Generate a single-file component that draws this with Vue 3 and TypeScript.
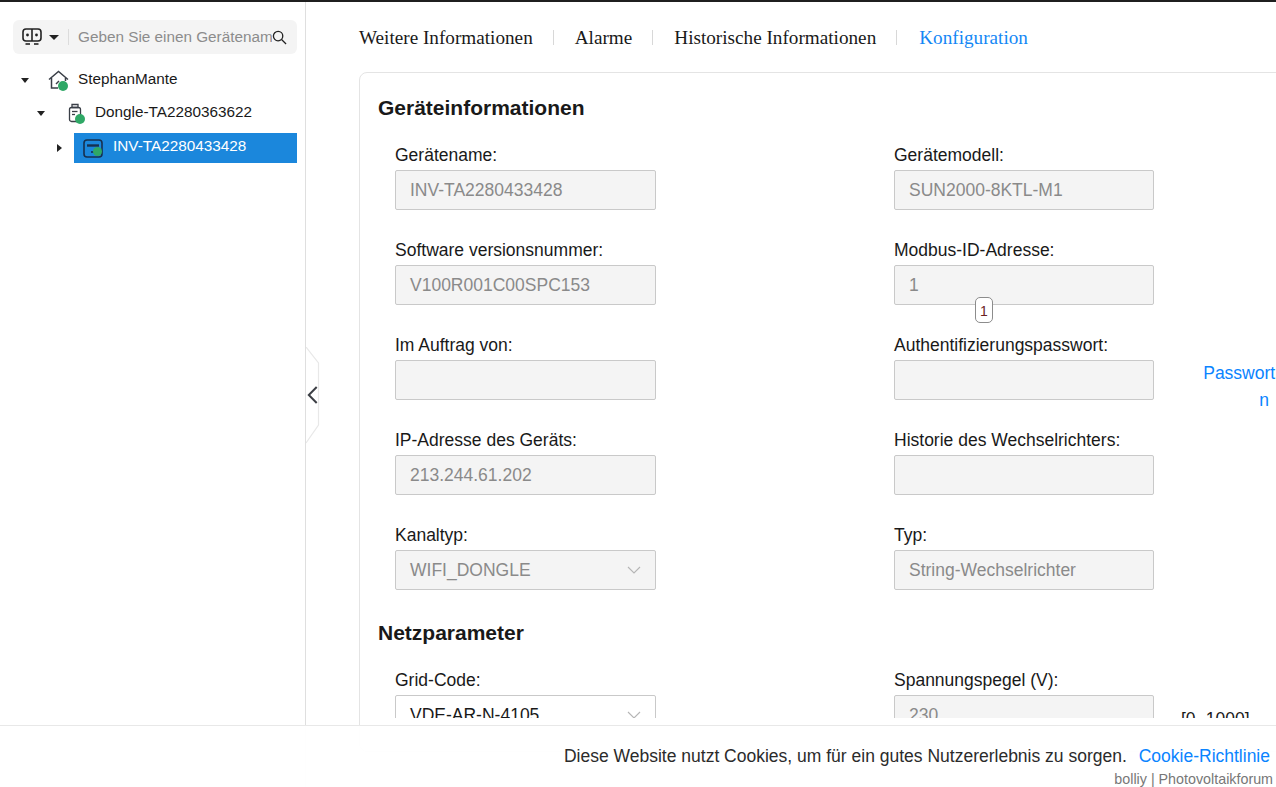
<template>
  <div class="page">
    <div class="layout">
      <aside class="sidebar">
        <div class="search">
          <svg class="device-icon" width="20" height="18" viewBox="0 0 20 18" fill="none" stroke="#222" stroke-width="1.6">
            <rect x="1" y="1" width="18" height="12" rx="3" />
            <line x1="10" y1="1" x2="10" y2="13" />
            <circle cx="5.5" cy="7" r="1.4" fill="#222" stroke="none" />
            <circle cx="14.5" cy="7" r="1.4" fill="#222" stroke="none" />
            <line x1="3.5" y1="16" x2="8" y2="16" />
            <line x1="12" y1="16" x2="16.5" y2="16" />
          </svg>
          <span class="caret down search-caret"></span>
          <span class="search-divider"></span>
          <span class="placeholder">Geben Sie einen Gerätenamen ein</span>
          <svg class="search-icon" width="15" height="15" viewBox="0 0 16 16" fill="none" stroke="#222" stroke-width="1.4">
            <circle cx="6.5" cy="6.5" r="5" />
            <line x1="10.2" y1="10.2" x2="15" y2="15" />
          </svg>
        </div>

        <ul class="tree">
          <li class="node level-0">
            <span class="caret down"></span>
            <span class="node-icon">
              <svg width="21" height="20" viewBox="0 0 21 20" fill="none" stroke="#3a3f47" stroke-width="1.5">
                <path d="M1 9.5 10.5 1.5 20 9.5" />
                <path d="M3.5 8v10h6.5M17.5 8v3" />
                <path d="M8 14l3-3" />
              </svg>
              <i class="dot"></i>
            </span>
            <span class="node-label">StephanMante</span>
          </li>
          <li class="node level-1">
            <span class="caret down"></span>
            <span class="node-icon">
              <svg width="14" height="20" viewBox="0 0 14 20" fill="none" stroke="#3a3f47" stroke-width="1.3">
                <path d="M4 1.5h6v3H4z" />
                <rect x="1.5" y="4.5" width="11" height="14" rx="2" />
                <line x1="4" y1="8.5" x2="9.5" y2="8.5" />
                <line x1="4" y1="11.5" x2="7" y2="11.5" />
              </svg>
              <i class="dot"></i>
            </span>
            <span class="node-label">Dongle-TA2280363622</span>
          </li>
          <li class="node level-2">
            <span class="caret right"></span>
            <div class="node-selected">
              <span class="node-icon">
                <svg width="20" height="19" viewBox="0 0 20 19" fill="none" stroke="#17304f" stroke-width="1.6">
                  <rect x="1" y="1" width="18" height="17" rx="3" />
                  <line x1="4" y1="6.5" x2="16" y2="6.5" stroke-width="2.4" />
                  <line x1="8" y1="13" x2="11" y2="13" />
                </svg>
                <i class="dot"></i>
              </span>
              <span class="node-label">INV-TA2280433428</span>
            </div>
          </li>
        </ul>
      </aside>

      <main class="content">
        <svg class="collapse" width="16" height="100" viewBox="0 0 16 100" fill="#fff" stroke="#e8e8e8" stroke-width="1.2">
          <path d="M0 0 12.5 16V78L0 96" />
          <path d="M10.7 40 2.8 48 10.7 56" fill="none" stroke="#3c3f45" stroke-width="2" />
        </svg>

        <nav class="tabs">
          <a v-for="tab in tabs" :key="tab" class="tab" :class="{ active: tab === 'Konfiguration' }">{{ tab }}</a>
        </nav>

        <section class="card">
          <div class="card-scroll">
            <h2 class="section-title">Geräteinformationen</h2>
            <div class="form-grid">
              <div v-for="field in deviceFields" :key="field.label" class="field">
                <label class="field-label">{{ field.label }}</label>
                <div class="field-row">
                  <div class="input" :class="{ select: field.select }">
                    <span>{{ field.value }}</span>
                    <svg v-if="field.select" class="chevron" width="14" height="8" viewBox="0 0 14 8" fill="none" stroke="#b5b5b5" stroke-width="1.1">
                      <path d="M1 1l6 6 6-6" />
                    </svg>
                  </div>
                  <a v-if="field.link" class="pw-link">{{ field.link }}</a>
                  <span v-if="field.tooltip" class="tooltip">{{ field.tooltip }}</span>
                </div>
              </div>
            </div>

            <h2 class="section-title second">Netzparameter</h2>
            <div class="form-grid">
              <div class="field">
                <label class="field-label">Grid-Code:</label>
                <div class="field-row">
                  <div class="input select editable">
                    <span>VDE-AR-N-4105</span>
                    <svg class="chevron" width="14" height="8" viewBox="0 0 14 8" fill="none" stroke="#b5b5b5" stroke-width="1.1">
                      <path d="M1 1l6 6 6-6" />
                    </svg>
                  </div>
                </div>
              </div>
              <div class="field">
                <label class="field-label">Spannungspegel (V):</label>
                <div class="field-row lower">
                  <div class="input"><span>230</span></div>
                  <span class="range">[0~1000]</span>
                </div>
              </div>
            </div>
          </div>
        </section>
      </main>
    </div>

    <footer class="cookie-bar">
      <p class="cookie-text">
        Diese Website nutzt Cookies, um für ein gutes Nutzererlebnis zu sorgen.
        <a class="cookie-link">Cookie-Richtlinie</a>
      </p>
      <p class="watermark">bolliy | Photovoltaikforum</p>
    </footer>
  </div>
</template>

<script setup lang="ts">
interface DeviceField {
  label: string
  value: string
  select?: boolean
  link?: string
  tooltip?: string
}

const tabs: string[] = ['Weitere Informationen', 'Alarme', 'Historische Informationen', 'Konfiguration']

const deviceFields: DeviceField[] = [
  { label: 'Gerätename:', value: 'INV-TA2280433428' },
  { label: 'Gerätemodell:', value: 'SUN2000-8KTL-M1' },
  { label: 'Software versionsnummer:', value: 'V100R001C00SPC153' },
  { label: 'Modbus-ID-Adresse:', value: '1', tooltip: '1' },
  { label: 'Im Auftrag von:', value: '' },
  { label: 'Authentifizierungspasswort:', value: '', link: 'Passwort ändern' },
  { label: 'IP-Adresse des Geräts:', value: '213.244.61.202' },
  { label: 'Historie des Wechselrichters:', value: '' },
  { label: 'Kanaltyp:', value: 'WIFI_DONGLE', select: true },
  { label: 'Typ:', value: 'String-Wechselrichter' }
]
</script>

<style>
html,
body {
  margin: 0;
  overflow: hidden;
  background: #fff;
}
</style>

<style scoped>
.page {
  position: relative;
  width: 1276px;
  height: 787px;
  overflow: hidden;
  border-top: 2px solid #1f1f1f;
  box-sizing: border-box;
  font-family: "Liberation Sans", Arial, sans-serif;
  color: #191919;
}

.layout {
  display: flex;
  height: 100%;
}

.sidebar {
  flex: 0 0 306px;
  box-sizing: border-box;
  border-right: 1px solid #dfdfdf;
  padding: 18px 8px 0 13px;
}

.search {
  display: flex;
  align-items: center;
  height: 34px;
  background: #f4f4f4;
  border-radius: 6px;
  padding-left: 9px;
}

.device-icon {
  flex: none;
}

.search-caret {
  margin-left: 7px;
  border-width: 5px 5px 0 !important;
}

.search-divider {
  flex: none;
  width: 1px;
  height: 16px;
  margin: 0 9px;
  background: #dcdcdc;
}

.placeholder {
  flex: 0 0 194px;
  overflow: hidden;
  white-space: nowrap;
  font-size: 15.3px;
  color: #8c8c8c;
}

.search-icon {
  flex: none;
}

.caret {
  display: inline-block;
  flex: none;
  width: 0;
  height: 0;
  border-style: solid;
}

.caret.down {
  border-width: 5px 4.5px 0;
  border-color: #222 transparent transparent;
}

.caret.right {
  border-width: 4.5px 0 4.5px 5px;
  border-color: transparent transparent transparent #222;
}

.tree {
  list-style: none;
  margin: 0;
  padding: 0;
}

.node {
  display: flex;
  align-items: center;
  font-size: 15.3px;
  white-space: nowrap;
}

.level-0 {
  height: 34px;
  margin-top: 9px;
  padding-left: 8px;
}

.level-1 {
  height: 32px;
  padding-left: 24px;
}

.level-2 {
  margin-top: 4px;
  padding-left: 44px;
}

.level-0 .node-icon {
  margin-left: 19px;
  width: 30px;
}

.level-1 .node-icon {
  margin-left: 23px;
  width: 27px;
}

.level-2 .caret {
  margin-right: 12px;
}

.node-icon {
  position: relative;
  display: inline-flex;
  flex: none;
  align-items: center;
  width: 30px;
  height: 20px;
}

.dot {
  position: absolute;
  left: 10px;
  top: 11px;
  width: 10px;
  height: 10px;
  border-radius: 50%;
  background: #2fa866;
}

.level-1 .dot {
  left: 7px;
  top: 11px;
}

.level-2 .dot {
  left: 10px;
  top: 9px;
  width: 9px;
  height: 9px;
}

.node-selected {
  display: flex;
  flex: 1;
  align-items: center;
  height: 30px;
  padding-left: 9px;
  background: #1b87dc;
  color: #fff;
}

.node-label {
  position: relative;
  top: -1px;
}

.node-selected .node-label {
  top: -2px;
}

.content {
  position: relative;
  flex: 1;
  min-width: 0;
  padding-left: 53px;
}

.collapse {
  position: absolute;
  left: 0;
  top: 345px;
}

.tabs {
  display: flex;
  align-items: center;
  box-sizing: border-box;
  height: 70px;
  padding-top: 2px;
  font-family: "Liberation Serif", "Times New Roman", serif;
  font-size: 19.2px;
}

.tab {
  position: relative;
  padding: 0 21px;
  white-space: nowrap;
  color: #191919;
}

.tab:first-child {
  padding-left: 0;
}

.tab:not(:last-child)::after {
  content: "";
  position: absolute;
  right: 0;
  top: 3px;
  width: 1px;
  height: 15px;
  background: #d8d8d8;
}

.tab.active {
  padding-left: 22px;
  color: #1487f5;
}

.card {
  box-sizing: border-box;
  width: 1100px;
  height: 680px;
  border: 1px solid #e4e4e4;
  border-radius: 8px;
  padding-bottom: 33px;
}

.card-scroll {
  box-sizing: border-box;
  height: 100%;
  overflow: hidden;
  padding: 23px 18px 0;
}

.section-title {
  margin: 0;
  font-size: 21px;
  line-height: 24px;
  font-weight: 700;
  color: #191919;
}

.section-title.second {
  margin-top: 31px;
}

.form-grid {
  display: grid;
  grid-template-columns: 499px 499px;
  padding-left: 17px;
  margin-top: 25px;
  row-gap: 30px;
}

.field:nth-child(even) .input {
  width: 260px;
}

.field-label {
  display: block;
  font-size: 17.5px;
  line-height: 20px;
  margin-bottom: 5px;
  color: #191919;
}

.field-row {
  position: relative;
  display: flex;
  align-items: center;
  height: 40px;
}

.field-row.lower {
  margin-top: 1px;
}

.input {
  display: flex;
  flex: none;
  align-items: center;
  justify-content: space-between;
  box-sizing: border-box;
  width: 261px;
  height: 40px;
  padding: 0 14px;
  border: 1px solid #c9c9c9;
  border-radius: 2px;
  background: #f4f4f4;
  color: #8a8a8a;
  font-size: 17.5px;
  white-space: nowrap;
}

.input.editable {
  background: #fff;
  color: #191919;
}

.chevron {
  flex: none;
}

.pw-link {
  flex: none;
  width: 124px;
  margin-left: 48px;
  margin-top: 13px;
  text-align: center;
  word-break: break-all;
  font-size: 17.5px;
  line-height: 27px;
  color: #0a84ff;
}

.tooltip {
  position: absolute;
  left: 81px;
  top: 32px;
  box-sizing: border-box;
  width: 18px;
  height: 26px;
  line-height: 26px;
  text-align: center;
  border: 1px solid #8c8c8c;
  border-radius: 5px;
  background: #fff;
  font-size: 14px;
  color: #6b1f1f;
}

.range {
  margin-left: 27px;
  margin-top: 8px;
  font-size: 17.5px;
  color: #191919;
}

.cookie-bar {
  position: absolute;
  left: 0;
  right: 0;
  bottom: 0;
  box-sizing: border-box;
  height: 62px;
  padding-right: 6px;
  border-top: 1px solid #e8e8e8;
  background: rgba(255, 255, 255, 0.95);
  text-align: right;
}

.cookie-text {
  margin: 18px 0 0;
  font-size: 17.5px;
  line-height: 24px;
  color: #2b2b2b;
}

.cookie-link {
  margin-left: 7px;
  color: #0a84ff;
}

.watermark {
  margin: 3px -3px 0 0;
  font-size: 14.3px;
  line-height: 16px;
  color: #777;
}
</style>
